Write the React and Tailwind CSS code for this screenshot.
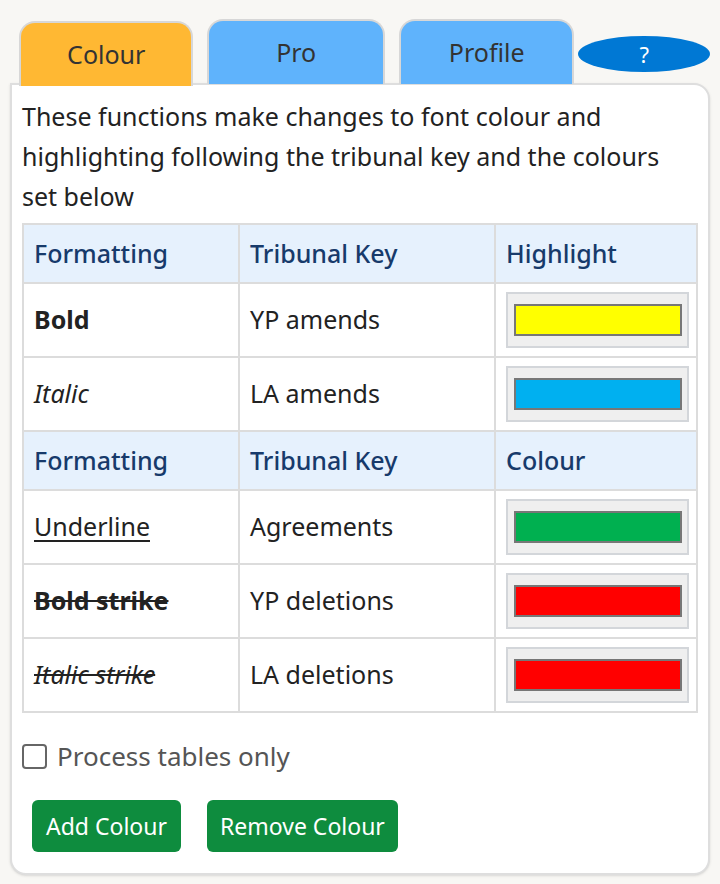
import React, { useState } from 'react';

const rowsTop = [
  { fmt: 'Bold', cls: 'font-bold', key: 'YP amends', color: 'bg-[#ffff00]' },
  { fmt: 'Italic', cls: 'italic', key: 'LA amends', color: 'bg-[#00b0f0]' },
];

const rowsBottom = [
  { fmt: 'Underline', cls: 'underline underline-offset-4', key: 'Agreements', color: 'bg-[#00b050]' },
  { fmt: 'Bold strike', cls: 'font-bold line-through', key: 'YP deletions', color: 'bg-[#ff0000]' },
  { fmt: 'Italic strike', cls: 'italic line-through', key: 'LA deletions', color: 'bg-[#ff0000]' },
];

const tabs = [
  { name: 'Colour', w: 'w-[175px]' },
  { name: 'Pro', w: 'w-[178px]' },
  { name: 'Profile', w: 'w-[176px]' },
];

function HeaderRow({ last }) {
  return (
    <tr className="bg-[#e6f1fd] text-[#173a6b] font-medium h-[59px]">
      <td className="border-2 border-[#dcdcdc] px-[10px]">Formatting</td>
      <td className="border-2 border-[#dcdcdc] px-[10px]">Tribunal Key</td>
      <td className="border-2 border-[#dcdcdc] px-[10px]">{last}</td>
    </tr>
  );
}

function Row({ row }) {
  return (
    <tr className="h-[74px]">
      <td className="border-2 border-[#dcdcdc] px-[10px]">
        <span className={row.cls}>{row.fmt}</span>
      </td>
      <td className="border-2 border-[#dcdcdc] px-[10px]">{row.key}</td>
      <td className="border-2 border-[#dcdcdc] px-[10px]">
        <button className="w-[183px] h-[56px] bg-[#efefef] border-2 border-[#d3d6da] flex items-center justify-center">
          <span className={`block w-[168px] h-[32px] border-2 border-[#777] ${row.color}`}></span>
        </button>
      </td>
    </tr>
  );
}

export default function App() {
  const [tab, setTab] = useState('Colour');
  const [tablesOnly, setTablesOnly] = useState(false);

  return (
    <div className="min-h-[884px] bg-[#f8f7f4] px-[10px] pt-[19px] text-[25px] text-[#222] font-['Noto_Sans','Open_Sans',sans-serif]">
      <div className="flex items-start h-[65px] pl-[9px] gap-[14px]">
        {tabs.map(t => (
          <button
            key={t.name}
            onClick={() => setTab(t.name)}
            className={`${t.w} h-[65px] rounded-t-[16px] border-2 border-[#d7d7d7] border-b-0 text-[#333] relative z-10 ${
              tab === t.name ? 'bg-[#ffb833] translate-y-[2px]' : 'bg-[#5fb3fc]'
            }`}
          >
            {t.name}
          </button>
        ))}
        <button className="-ml-[10px] mt-[17px] w-[132px] h-[36px] rounded-[50%] bg-[#0078d4] text-white text-[22px]">?</button>
      </div>
      <div className="bg-white border-2 border-[#dedede] rounded-[16px] rounded-tl-none shadow-sm px-[10px] pt-[11px] pb-[21px] -mt-[1px]">
        <p className="leading-[40px]">
          These functions make changes to font colour and highlighting following the tribunal key and the colours set below
        </p>
        <table className="w-full mt-[7px] border-collapse border-2 border-[#dcdcdc] table-fixed">
          <colgroup>
            <col className="w-[216px]" />
            <col className="w-[256px]" />
            <col />
          </colgroup>
          <tbody>
            <HeaderRow last="Highlight" />
            {rowsTop.map(r => <Row key={r.fmt} row={r} />)}
            <HeaderRow last="Colour" />
            {rowsBottom.map(r => <Row key={r.fmt} row={r} />)}
          </tbody>
        </table>
        <label className="flex items-center gap-[10px] mt-[24px] text-[#555] text-[26px]">
          <input
            type="checkbox"
            checked={tablesOnly}
            onChange={e => setTablesOnly(e.target.checked)}
            className="w-[25px] h-[25px] appearance-none border-2 border-[#666] rounded-[4px] bg-white"
          />
          Process tables only
        </label>
        <div className="flex gap-[26px] mt-[24px] ml-[10px]">
          <button className="h-[52px] px-[14px] rounded-[6px] bg-[#0e8c3e] text-white text-[23px]">Add Colour</button>
          <button className="h-[52px] px-[13px] rounded-[6px] bg-[#0e8c3e] text-white text-[23px]">Remove Colour</button>
        </div>
      </div>
    </div>
  );
}
